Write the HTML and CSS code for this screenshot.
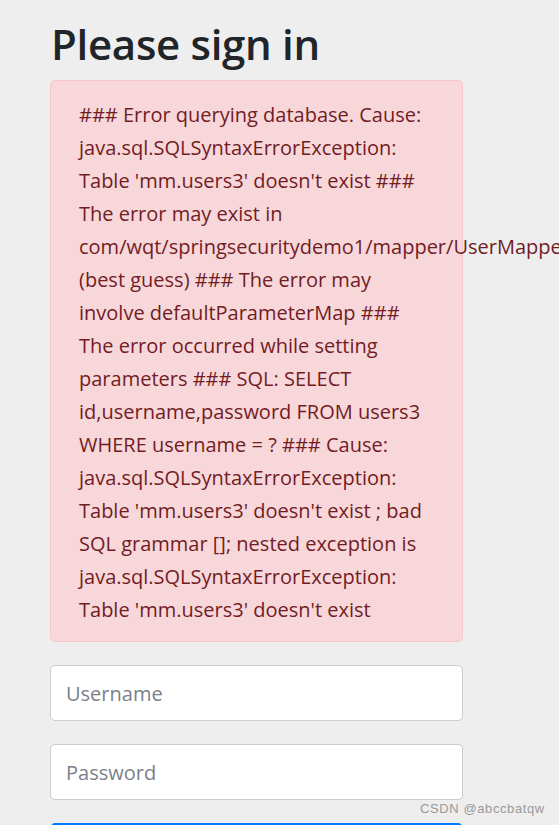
FILE: index.html
```html
<!DOCTYPE html>
<html lang="en">
<head>
<meta charset="utf-8">
<title>Please sign in</title>
<link rel="stylesheet" href="styles.css">
</head>
<body>
<div class="container">
  <form class="form-signin">
    <h2 class="form-signin-heading">Please sign in</h2>
    <div class="alert alert-danger" role="alert">### Error querying database. Cause: java.sql.SQLSyntaxErrorException: Table 'mm.users3' doesn't exist ### The error may exist in com/wqt/springsecuritydemo1/mapper/UserMapper.java (best guess) ### The error may involve defaultParameterMap ### The error occurred while setting parameters ### SQL: SELECT id,username,password FROM users3 WHERE username = ? ### Cause: java.sql.SQLSyntaxErrorException: Table 'mm.users3' doesn't exist ; bad SQL grammar []; nested exception is java.sql.SQLSyntaxErrorException: Table 'mm.users3' doesn't exist</div>
    <input type="text" class="form-control" placeholder="Username">
    <input type="password" class="form-control" placeholder="Password">
    <button class="btn btn-primary" type="submit">Sign in</button>
  </form>
</div>
<div class="watermark">CSDN @abccbatqw</div>
</body>
</html>
```
FILE: styles.css
```css
html, body {
  margin: 0;
  padding: 0;
  background: #eeeeee;
  overflow: hidden;
  height: 825px;
}
body {
  font-family: "Open Sans", "Noto Sans", sans-serif;
  color: #212529;
  position: relative;
}
.container {
  padding: 0 0 0 50px;
}
.form-signin {
  width: 413px;
  display: flex;
  flex-direction: column;
}
.form-signin-heading {
  font-size: 42px;
  font-weight: 600;
  line-height: 52px;
  margin: 18px 0 10px 1px;
  letter-spacing: -0.3px;
  color: #212529;
}
.alert {
  box-sizing: border-box;
  background: #f8d7da;
  border: 1px solid #f5c6cb;
  border-radius: 5px;
  color: #721c24;
  font-size: 20px;
  line-height: 33px;
  padding: 17px 30px 15px 28px;
  margin-bottom: 23px;
}
.form-control {
  box-sizing: border-box;
  height: 56px;
  border: 1px solid #cccccc;
  border-radius: 5px;
  background: #fff;
  font-family: inherit;
  font-size: 20px;
  padding: 0 15px;
  margin: 0 0 23px 0;
  color: #495057;
}
.form-control::placeholder {
  color: #7a8189;
}
.btn {
  height: 56px;
  border: 1px solid #007bff;
  background: #007bff;
  color: #fff;
  border-radius: 5px;
  font-family: inherit;
  font-size: 20px;
}
.watermark {
  position: absolute;
  left: 420px;
  top: 801px;
  font-family: "Liberation Sans", sans-serif;
  font-size: 13px;
  color: #9a9a9a;
  letter-spacing: 0.6px;
}
```
